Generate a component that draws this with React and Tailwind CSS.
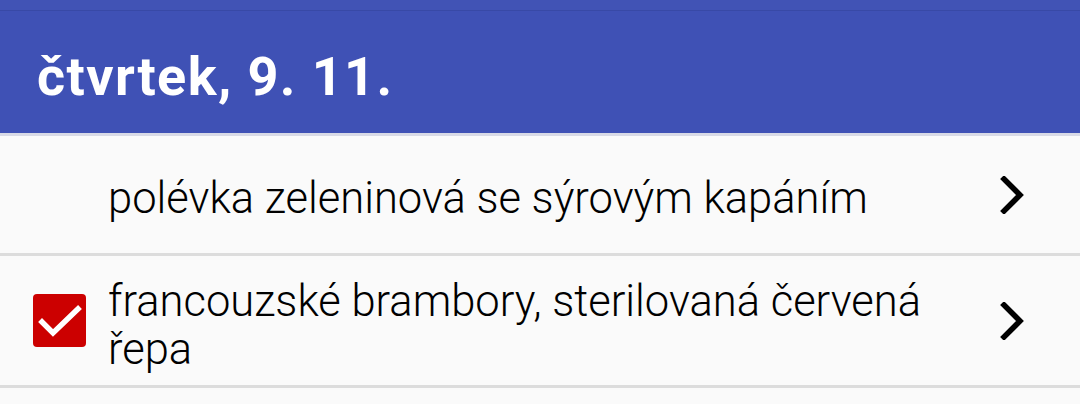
import React from "react";

function Chevron() {
  return (
    <svg width="26" height="38" viewBox="0 0 26 38" className="shrink-0">
      <polyline points="4,3 20,19 4,35" fill="none" stroke="#000" strokeWidth="5.5" strokeLinecap="square" strokeLinejoin="miter" />
    </svg>
  );
}

function Check() {
  return (
    <div className="w-[53px] h-[53px] rounded-[4px] bg-[#cc0000] shrink-0">
      <svg width="53" height="53" viewBox="0 0 53 53">
        <polyline points="9,28 20,39 45,15" fill="none" stroke="#fff" strokeWidth="5.5" strokeLinecap="square" />
      </svg>
    </div>
  );
}

export default function App() {
  return (
    <div className="w-[1080px] h-[404px] overflow-hidden bg-[#fafafa]" style={{ fontFamily: "Roboto, 'Noto Sans', sans-serif" }}>
      <div className="bg-[#3f51b5]">
        <div className="h-[11px] bg-[#4153b5] border-b border-[#3849a6]" />
        <div className="h-[122px] flex items-center pl-[37px] pt-[10px]">
          <h1 className="text-white font-bold text-[54px] leading-none tracking-[1.4px]">čtvrtek, 9. 11.</h1>
        </div>
      </div>
      <div className="h-[3px] bg-[#d8dae6]" />
      <div className="h-[120px] flex items-center border-b-[3px] border-[#dcdcdc]">
        <div className="w-[108px] shrink-0" />
        <div className="flex-1 text-[43.5px] font-light leading-[48px] text-[#000] pt-[8px]">polévka zeleninová se sýrovým kapáním</div>
        <div className="w-[100px] shrink-0 flex items-center pl-[20px]">
          <Chevron />
        </div>
      </div>
      <div className="h-[132px] flex items-center border-b-[3px] border-[#dcdcdc]">
        <div className="w-[108px] shrink-0 flex items-center pl-[33px]">
          <Check />
        </div>
        <div className="flex-1 text-[43.5px] font-light leading-[48px] text-[#000] pt-[10px]">francouzské brambory, sterilovaná červená řepa</div>
        <div className="w-[100px] shrink-0 flex items-center pl-[20px]">
          <Chevron />
        </div>
      </div>
    </div>
  );
}
